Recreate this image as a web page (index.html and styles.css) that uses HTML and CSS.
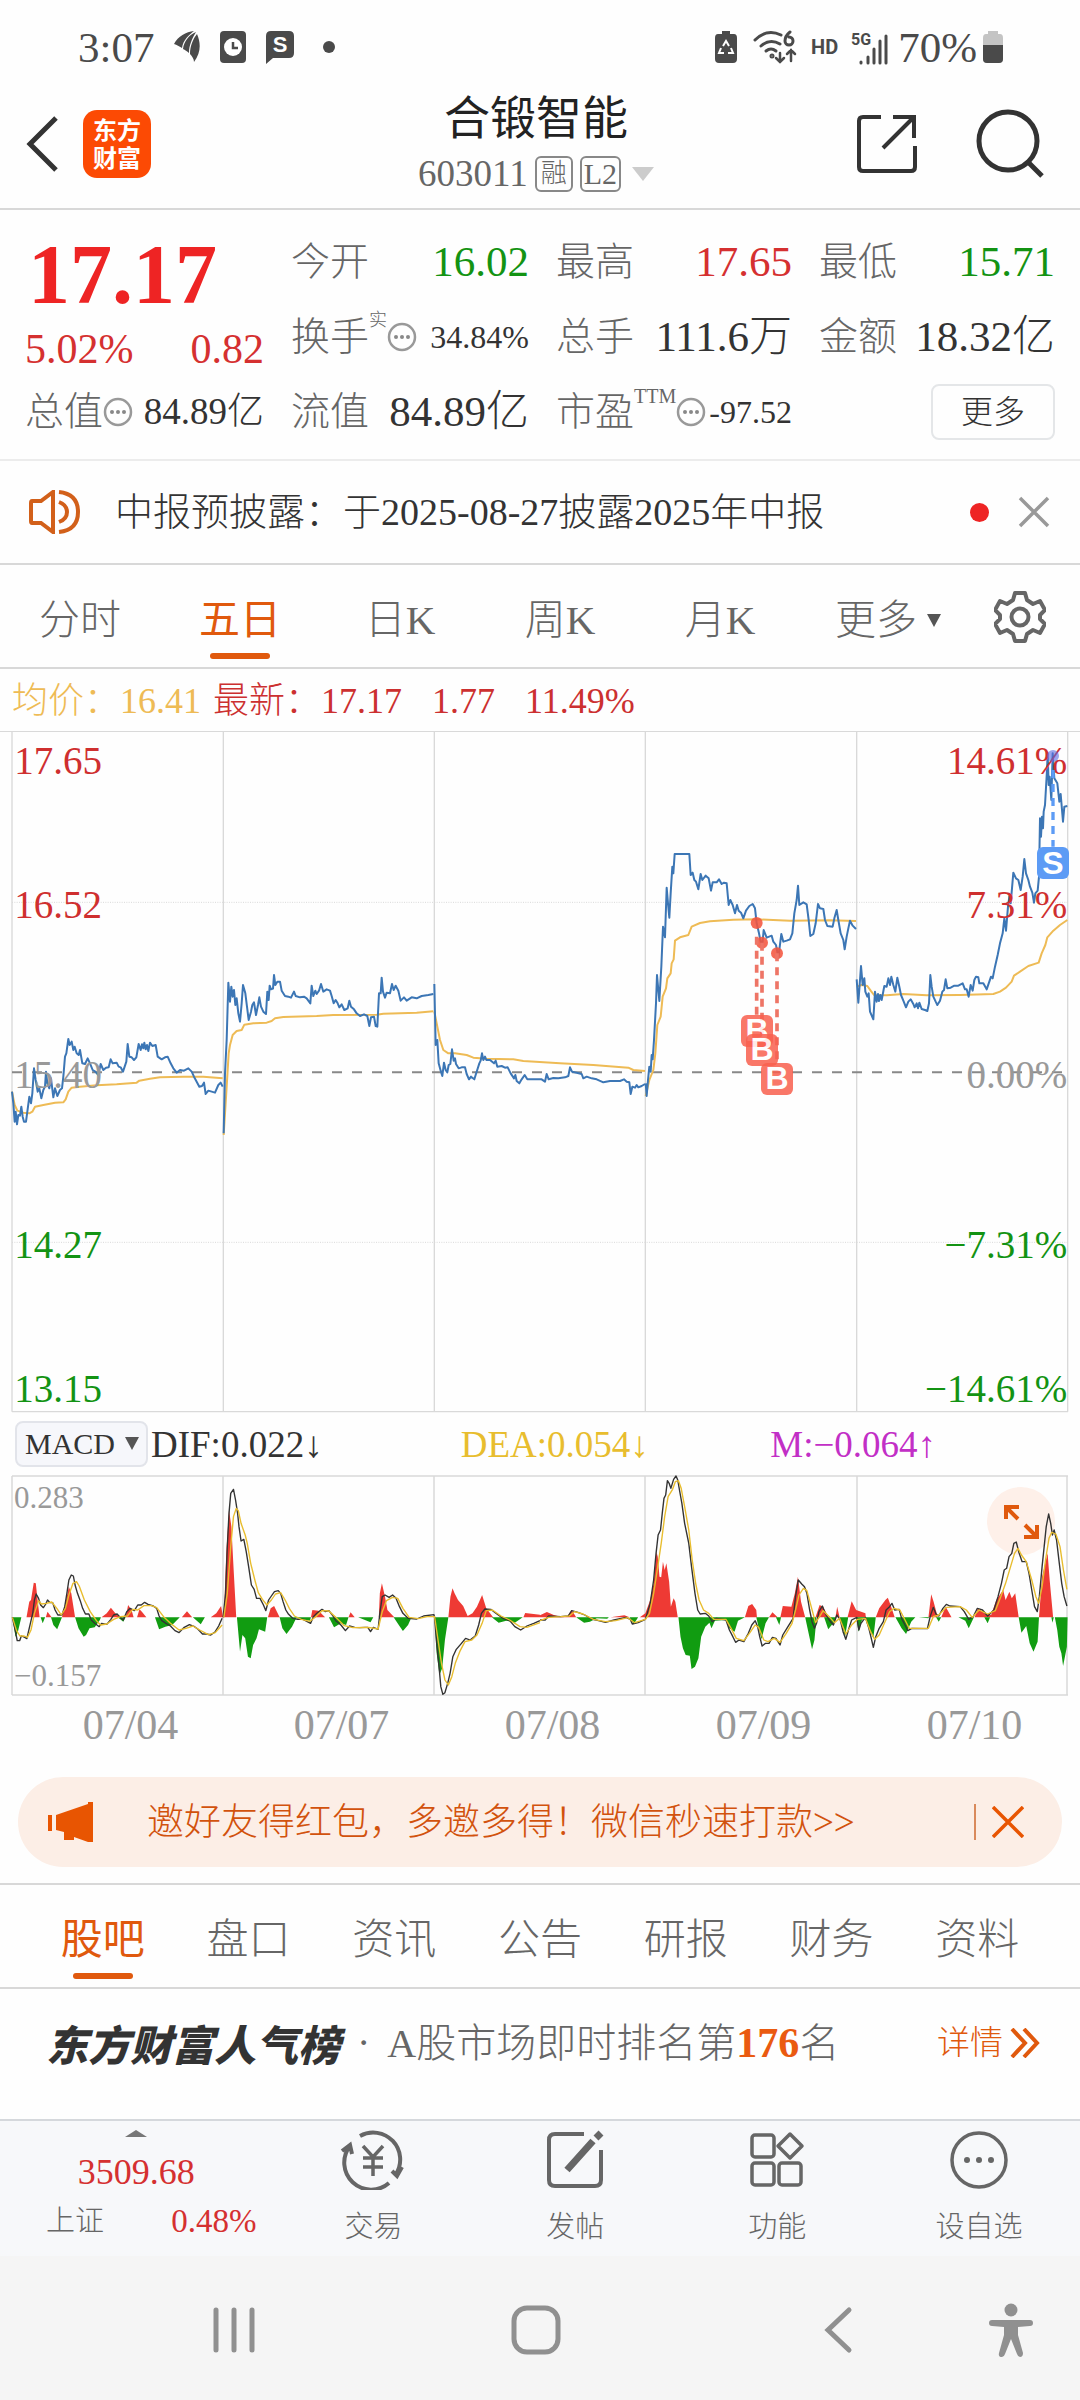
FILE: index.html
```html
<!DOCTYPE html>
<html lang="zh-CN">
<head>
<meta charset="utf-8">
<meta name="viewport" content="width=device-width, initial-scale=1">
<title>合锻智能 603011</title>
<link rel="stylesheet" href="styles.css">
</head>
<body>
<div class="status">
  <span class="status-time">3:07</span>
  <svg width="26" height="32" viewBox="0 0 26 32" fill="#4a4a4a"><path d="M0 13C4 5 12 1 20 0C15 4 9 9 8 17C5 15 3 14 0 13Z"/><path d="M9 18C10 10 15 4 22 1C18 8 15 14 15 22C13 20 11 19 9 18Z"/><path d="M16 23C16 15 19 8 23 3C27 12 27 22 20 31C20 28 18 25 16 23Z"/></svg>
  <svg class="st-clock" width="26" height="32" viewBox="0 0 26 32"><rect width="26" height="32" rx="4" fill="#4a4a4a"/><circle cx="13" cy="16" r="9" fill="#fff"/><path d="M13 11v6h5" fill="none" stroke="#4a4a4a" stroke-width="2.5"/></svg>
  <svg class="st-s" width="28" height="34" viewBox="0 0 28 34"><path d="M5 1H23Q28 1 28 6V23Q28 28 23 28H7L0 34V6Q0 1 5 1Z" fill="#4a4a4a"/><text x="14" y="22" text-anchor="middle" class="s-mark">S</text></svg>
  <svg class="st-dot" width="14" height="14" viewBox="0 0 14 14"><circle cx="7" cy="7" r="6" fill="#4a4a4a"/></svg>
  <div class="status-right">
    <svg width="22" height="32" viewBox="0 0 22 32"><path d="M7 0h8v3h4q3 0 3 4v21q0 4-4 4H4q-4 0-4-4V7q0-4 3-4h4Z" fill="#4a4a4a"/><path d="M8 15l3-5l3 5M16 17l2 5h-5M9 22H4l2-5" fill="none" stroke="#fff" stroke-width="2"/></svg>
    <svg class="st-wifi" width="44" height="34" viewBox="0 0 44 34" fill="none" stroke="#4a4a4a" stroke-width="3" stroke-linecap="round"><path d="M2 10Q14-2 28 5"/><path d="M8 16Q17 8 27 14"/><path d="M13 21Q18 17 23 21"/><circle cx="19" cy="26" r="1"/><path d="M37 2Q32 6 32 11a4 4 0 1 0 4-4"/><path d="M27 23v9m-4-4l4 4l4-4M38 31V20m-4 4l4-4l4 4" stroke-width="2.5"/></svg>
    <span class="st-hd">HD</span>
    <svg class="st-signal" width="40" height="38" viewBox="0 0 40 38"><text x="1" y="17" class="st-5g">5G</text><g stroke="#4a4a4a" stroke-width="3" stroke-linecap="round"><path d="M11 34v1M18 29v6M24 21v14M30 13v22M36 8v27"/></g></svg>
    <span class="status-time">70%</span>
    <svg class="st-bat" width="20" height="32" viewBox="0 0 20 32"><path d="M5 0h10v3h2q3 0 3 4v21q0 4-4 4H4q-4 0-4-4V7q0-4 3-4h2Z" fill="#c4c4c4"/><path d="M0 14h20v14q0 4-4 4H4q-4 0-4-4Z" fill="#4a4a4a"/></svg>
  </div>
</div>

<header class="top">
  <div class="top-left">
    <button class="plain" aria-label="返回"><svg width="34" height="56" viewBox="0 0 34 56" fill="none" stroke="#333" stroke-width="5"><path d="M30 2L4 28L30 54"/></svg></button>
    <div class="logo">东方<br>财富</div>
  </div>
  <div class="top-mid">
    <h1>合锻智能</h1>
    <div class="code"><span>603011</span><span class="tag">融</span><span class="tag tag-l2">L2</span><i class="caret"></i></div>
  </div>
  <div class="top-right">
    <button class="plain" aria-label="分享"><svg width="62" height="62" viewBox="0 0 62 62" fill="none" stroke="#333" stroke-width="4"><path d="M25 4H7Q3 4 3 8V54Q3 58 7 58H55Q59 58 59 54V33M37 4H58V25M58 4L27 35"/></svg></button>
    <button class="plain" aria-label="搜索"><svg width="70" height="70" viewBox="0 0 70 70" fill="none" stroke="#333" stroke-width="5"><circle cx="32" cy="32" r="29"/><path d="M52 53L66 67"/></svg></button>
  </div>
</header>

<section class="quote">
  <div class="price-box">
    <div class="price">17.17</div>
    <div class="change"><span>5.02%</span><span>0.82</span></div>
  </div>
  <div class="item a"><span class="lab">今开</span><span class="val green">16.02</span></div>
  <div class="item b"><span class="lab">最高</span><span class="val red">17.65</span></div>
  <div class="item c"><span class="lab">最低</span><span class="val green">15.71</span></div>
  <div class="item a"><span class="lab">换手<sup class="zh">实</sup><svg class="dots" viewBox="0 0 30 30"><use href="#dots"/></svg></span><span class="val small">34.84%</span></div>
  <div class="item b"><span class="lab">总手</span><span class="val">111.6万</span></div>
  <div class="item c"><span class="lab">金额</span><span class="val">18.32亿</span></div>
  <div class="item first"><span class="lab">总值<svg class="dots" viewBox="0 0 30 30"><use href="#dots"/></svg></span><span class="val mid">84.89亿</span></div>
  <div class="item a"><span class="lab">流值</span><span class="val">84.89亿</span></div>
  <div class="item b"><span class="lab">市盈<sup>TTM</sup><svg class="dots" viewBox="0 0 30 30"><use href="#dots"/></svg></span><span class="val small">-97.52</span></div>
  <div class="item c end"><button class="more">更多</button></div>
</section>
<svg class="defs" width="0" height="0" aria-hidden="true"><defs><g id="dots"><circle cx="15" cy="15" r="13" fill="none" stroke="#999" stroke-width="2.5"/><g fill="#888"><circle cx="9" cy="15" r="2"/><circle cx="15" cy="15" r="2"/><circle cx="21" cy="15" r="2"/></g></g></defs></svg>

<section class="notice">
  <svg width="52" height="44" viewBox="0 0 52 44" fill="none" stroke="#d2601a" stroke-width="4"><path d="M3 11H12L24 2V42L12 33H3Q2 33 2 31V13Q2 11 3 11ZM30 12Q38 15 38 22Q38 29 30 32M30 2Q49 4 49 22Q49 40 30 42"/></svg>
  <span class="notice-text">中报预披露：于2025-08-27披露2025年中报</span>
  <i class="red-dot"></i>
  <button class="plain" aria-label="关闭"><svg width="32" height="32" viewBox="0 0 32 32" stroke="#999" stroke-width="3.5"><path d="M2 2L30 30M30 2L2 30"/></svg></button>
</section>

<nav class="periods">
  <button>分时</button>
  <button class="on">五日</button>
  <button>日K</button>
  <button>周K</button>
  <button>月K</button>
  <button class="period-more">更多<i class="caret dark"></i></button>
  <button class="gear" aria-label="设置"><svg width="52" height="52" viewBox="0 0 52 52" fill="none" stroke="#666" stroke-width="4" stroke-linejoin="round"><path d="M21 2h10l2 7l6 4l7-3l5 9l-5 5v4l5 5l-5 9l-7-3l-6 4l-2 7H21l-2-7l-6-4l-7 3l-5-9l5-5v-4l-5-5l5-9l7 3l6-4Z"/><circle cx="26" cy="26" r="8.500"/></svg></button>
</nav>

<div class="avg"><span class="gold">均价：16.41</span><span>最新：17.17</span><span class="gap">1.77</span><span class="gap">11.49%</span></div>

<svg class="chart" viewBox="0 33 3240 2046" role="img" aria-label="五日走势">
  <g fill="none" stroke="#d9d9d9" stroke-width="4">
    <path d="M0 34H3240M36 2075H3204M36 34V2075M670 34V2075M1303 34V2075M1936 34V2075M2570 34V2075M3203 34V2075"/>
    <path d="M36 547H3204M36 1567H3204" stroke-width="3" stroke-dasharray="3 4"/>
    <path d="M36 1057H3204" stroke="#888" stroke-width="6" stroke-dasharray="30 30"/>
  </g>
  <g fill="none" stroke="#eebb55" stroke-width="6" stroke-linejoin="round">
    <polyline points="36,1115 44,1155 52,1172 70,1178 88,1180 97,1175 105,1160 130,1155 165,1148 190,1147 197,1138 205,1115 215,1103 240,1100 290,1096 350,1093 410,1088 418,1082 450,1076 480,1072 550,1070 610,1070 668,1075"/>
    <polyline points="671,1245 680,1100 686,1000 690,975 698,945 710,933 725,930 733,914 760,910 800,908 815,903 825,895 850,891 950,888 1000,885 1130,884 1150,881 1250,878 1300,874"/>
    <g transform="translate(1260 0)">
      <polyline points="43,875 52,920 60,960 70,990 85,1000 105,1000 140,1005 160,1013 200,1016 280,1018 310,1023 420,1030 520,1035 625,1043 640,1050 675,1053"/>
      <polyline points="677,1128 688,1080 700,1050 706,1000 712,915 722,890 728,830 738,805 742,775 752,760 755,730 761,718 765,662 780,652 805,645 815,620 840,609 870,604 940,599 1010,598 1110,602 1230,601 1308,603"/>
    </g>
    <g transform="translate(1920 0)">
      <polyline points="650,800 665,795 682,798 692,812 702,825 740,826 790,822 860,826 960,825 1060,822 1080,815 1098,803 1115,785 1122,767 1140,755 1165,738 1196,728 1205,700 1216,675 1222,652 1240,632 1260,615 1282,600"/>
    </g>
  </g>
  <g fill="none" stroke="#3c76b5" stroke-width="6" stroke-linejoin="round">
    <polyline points="36,1115 40,1150 44,1205 47,1175 51,1213 55,1185 60,1187 64,1160 68,1190 72,1205 78,1205 82,1175 88,1130 93,1150 97,1120 102,1045 107,1080 113,1115 118,1105 124,1135 130,1110 135,1100 138,1055 142,1090 148,1105 153,1075 160,1132 165,1105 172,1128 180,1110 186,1105 190,1070 195,1010 199,1000 205,957 209,975 215,965 220,990 224,980 230,1000 236,1005 240,990 247,1030 255,1032 263,1015 270,1030 278,1050 286,1055 295,1065 302,1032 310,1050 318,1043 326,1042 332,1018 338,1030 350,1028 356,1040 362,1042 369,1055 374,1040 379,1025 383,972 388,1010 395,1012 402,1020 409,1012 416,972 422,990 426,973 430,985 433,968 437,988 441,975 445,993 450,968 457,978 467,975 473,1010 485,1018 495,1012 503,1010 512,1030 520,1045 530,1058 540,1050 552,1052 565,1045 575,1055 582,1070 590,1085 598,1100 606,1098 612,1088 617,1122 625,1112 635,1115 645,1118 655,1095 662,1088 668,1100"/>
    <polyline points="671,1240 675,1060 680,960 685,788 690,845 694,800 698,830 702,810 706,855 710,835 715,880 720,905 725,850 729,795 736,820 741,860 746,900 753,875 757,855 762,847 768,885 774,855 778,832 783,860 790,875 798,882 802,815 806,840 809,797 813,808 819,806 822,765 826,795 832,785 840,785 845,812 855,828 865,830 873,833 882,815 887,828 900,832 912,830 920,835 931,850 935,797 940,828 946,812 950,822 957,812 963,792 970,815 980,808 990,812 995,828 1001,850 1007,840 1013,850 1018,862 1025,853 1033,870 1043,865 1048,842 1053,860 1062,868 1070,880 1080,888 1092,883 1102,888 1108,918 1113,892 1122,890 1127,918 1132,920 1137,820 1142,820 1145,773 1149,815 1155,833 1160,818 1170,820 1176,792 1181,810 1187,797 1195,812 1202,842 1212,832 1220,842 1235,832 1250,835 1265,828 1285,825 1300,822"/>
    <g transform="translate(1260 0)">
      <polyline points="43,792 47,975 52,960 56,1030 62,1052 67,1068 72,1028 77,1050 82,1057 86,1035 91,1032 96,988 101,1022 105,1015 108,1032 116,1045 125,1042 135,1042 140,1062 147,1078 153,1070 163,1078 170,1055 178,1030 182,1022 186,1000 190,1020 195,1010 199,1020 210,1020 222,1030 227,1022 232,1040 245,1038 255,1043 263,1042 272,1060 282,1075 286,1065 290,1083 298,1090 305,1078 314,1065 322,1078 345,1078 365,1078 375,1085 380,1062 386,1078 400,1074 415,1075 435,1072 445,1068 450,1042 456,1055 470,1058 485,1062 490,1075 500,1070 515,1075 530,1078 550,1087 570,1083 600,1083 612,1078 620,1085 628,1087 632,1122 637,1100 645,1103 650,1095 655,1102 665,1098 675,1092"/>
      <polyline points="677,1090 680,1128 684,1080 688,1040 692,1055 695,1005 698,1018 702,960 708,850 711,765 718,843 724,740 729,620 735,652 740,503 744,550 748,593 752,520 757,440 760,460 764,402 808,402 812,465 818,458 823,480 828,485 835,508 842,462 847,480 857,467 866,475 873,512 878,487 890,487 897,478 905,492 912,488 920,490 926,555 931,540 938,555 945,580 951,555 956,572 963,578 970,595 978,572 988,558 998,552 1005,565 1010,610 1017,640 1026,685 1031,630 1040,653 1055,647 1060,665 1068,675 1075,713 1084,642 1090,665 1100,662 1110,658 1117,640 1123,580 1130,540 1134,497 1138,555 1150,547 1160,553 1166,600 1171,648 1180,642 1187,610 1194,552 1200,565 1210,567 1215,600 1222,618 1238,620 1243,595 1250,570 1255,600 1262,640 1270,660 1274,688 1280,650 1285,625 1290,602 1298,617 1308,627"/>
    </g>
    <g transform="translate(1920 0)">
      <polyline points="650,778 655,848 660,780 663,738 668,795 673,775 676,815 682,830 686,820 690,875 700,898 705,815 710,845 714,822 717,843 721,825 725,840 733,798 740,800 745,775 750,795 754,770 760,795 766,815 772,773 778,800 783,825 790,842 798,862 805,845 812,838 820,852 824,862 830,850 834,865 838,848 845,867 855,870 862,873 867,850 871,765 875,800 880,830 887,845 892,855 900,842 907,815 912,810 917,778 922,805 932,803 943,797 955,797 968,790 975,808 980,808 986,830 992,795 998,812 1003,780 1008,770 1015,772 1018,790 1030,790 1040,808 1048,785 1053,770 1058,775 1065,740 1073,705 1080,670 1088,640 1093,595 1098,632 1104,560 1108,530 1112,550 1116,505 1120,458 1128,475 1135,480 1142,510 1148,470 1153,417 1158,460 1165,480 1170,500 1177,518 1182,548 1186,520 1193,512 1197,470 1200,295 1203,350 1206,290 1209,325 1211,275 1215,255 1221,150 1223,100 1226,195 1229,170 1234,240 1238,100 1243,175 1252,190 1258,245 1262,222 1269,305 1273,260 1282,258"/>
    </g>
  </g>
  <g class="axis">
    <text x="43" y="163" fill="#cf2f2f">17.65</text>
    <text x="43" y="595" fill="#cf2f2f">16.52</text>
    <text x="43" y="1103" fill="#999">15.40</text>
    <text x="43" y="1614" fill="#139313">14.27</text>
    <text x="43" y="2046" fill="#139313">13.15</text>
    <g text-anchor="end">
      <text x="3202" y="163" fill="#cf2f2f">14.61%</text>
      <text x="3202" y="595" fill="#cf2f2f">7.31%</text>
      <text x="3202" y="1103" fill="#999">0.00%</text>
      <text x="3202" y="1614" fill="#139313">−7.31%</text>
      <text x="3202" y="2046" fill="#139313">−14.61%</text>
    </g>
  </g>
  <g transform="translate(1260 0)">
    <g fill="#f4553f" fill-opacity=".88"><circle cx="1010" cy="609" r="18"/><circle cx="1026" cy="668" r="18"/><circle cx="1071" cy="700" r="18"/></g>
    <g stroke="#ee7566" stroke-width="11" stroke-dasharray="24 18"><path d="M1010 650V885M1026 668V942M1071 700V1028"/></g>
    <g class="mark">
      <g opacity=".85"><rect x="963" y="885" width="96" height="96" rx="18" fill="#f9604f"/><text x="1011" y="964">B</text></g>
      <g opacity=".85"><rect x="978" y="942" width="96" height="96" rx="18" fill="#f9604f"/><text x="1026" y="1021">B</text></g>
      <g opacity=".85"><rect x="1023" y="1029" width="96" height="96" rx="18" fill="#f9604f"/><text x="1071" y="1108">B</text></g>
    </g>
  </g>
  <g transform="translate(1920 0)">
    <circle cx="1239" cy="108" r="18" fill="#5a6be0" fill-opacity=".6"/>
    <path d="M1239 150V380" stroke="#5c9bf5" stroke-width="10" stroke-dasharray="24 18"/>
    <g class="mark"><rect x="1191" y="381" width="96" height="96" rx="18" fill="#5c9bf5"/><text x="1239" y="463">S</text></g>
  </g>
</svg>

<div class="macd-bar">
  <label class="pick"><select aria-label="指标"><option>MACD</option><option>KDJ</option></select><i class="caret dark"></i></label>
  <span>DIF:0.022↓</span><span class="yellow">DEA:0.054↓</span><span class="violet">M:−0.064↑</span>
</div>

<div class="macd">
  <svg class="chart" viewBox="0 0 1080 222" role="img" aria-label="MACD">
    <path d="M12 1H1068M12 220H1068M12 1V220M223 1V220M434 1V220M645 1V220M857 1V220M1067 1V220" fill="none" stroke="#d9d9d9" stroke-width="1.500"/>
    <g class="macd-axis"><text x="14" y="33">0.283</text><text x="14" y="211">−0.157</text></g>
    <g transform="translate(0 -95) scale(.34437 .33333)">
      <path fill="#ee3a34" d="M77 712L85 665L90 660L98 608L104 610L108 650L115 712ZM133 712L138 695L150 712ZM180 712L190 670L200 620L207 640L218 712ZM295 712L310 700L322 683L335 700L348 712ZM365 712L372 675L382 690L388 712ZM398 712L405 688L412 695L425 712ZM528 712L543 694L558 712ZM612 712L628 700L642 678L648 712ZM650 712L657 520L665 390L672 440L678 560L686 712ZM778 712L786 685L796 678L812 712ZM903 712L907 690L925 692L944 712ZM1012 712L1018 697L1030 712ZM1100 712L1103 640L1109 610L1118 650L1125 690L1145 712ZM1302 712L1308 650L1314 625L1320 640L1330 660L1345 678L1358 708L1372 700L1385 680L1400 645L1412 685L1432 712ZM1520 712L1525 699L1568 704L1568 712Z"/>
      <path fill="#119c11" d="M36 712L45 770L52 755L62 712ZM118 712L124 730L131 712ZM148 712L155 735L166 748L180 712ZM218 712L228 745L243 770L250 765L260 745L275 742L290 720L293 712ZM342 712L358 725L365 712ZM450 712L462 748L480 740L500 735L522 712ZM560 712L583 733L595 712ZM688 712L697 815L704 765L712 775L720 830L728 835L735 795L745 775L752 748L770 755L776 712ZM812 712L820 745L832 762L848 740L860 715L900 722L903 712ZM955 712L970 742L990 730L1005 735L1012 712ZM1040 712L1076 727L1084 712ZM1143 712L1158 735L1170 753L1185 735L1195 712ZM1262 712L1268 820L1276 885L1284 865L1292 780L1302 712ZM1428 712L1448 728L1470 722L1495 728L1518 712Z"/>
    </g>
    <g transform="translate(540 -95) scale(.34437 .33333)">
      <path fill="#ee3a34" d="M0 712L0 706L20 696L40 705L60 710L80 708L92 690L105 712ZM205 712L245 706L260 712ZM290 712L306 700L320 660L330 610L338 515L342 530L347 590L352 592L357 545L362 570L367 550L375 605L380 680L388 655L393 665L400 712ZM595 712L605 678L616 672L628 690L630 712ZM665 712L675 697L690 712ZM698 712L705 678L730 680L740 640L749 590L758 665L770 712ZM800 712L812 675L822 680L838 712ZM858 712L863 680L870 712ZM893 712L905 664L918 690L945 700L946 712ZM975 712L985 685L1003 660L1010 653L1018 675L1030 712ZM1128 712L1136 643L1143 665L1155 712ZM1165 712L1178 680L1195 712ZM1262 712L1272 685L1290 700L1310 705L1325 660L1345 630L1352 660L1363 635L1370 655L1380 640L1390 712ZM1449 712L1458 590L1466 555L1474 520L1480 600L1490 712Z"/>
      <path fill="#119c11" d="M105 712L128 728L145 725L165 715L195 716L200 712ZM260 712L272 733L285 712ZM402 712L408 770L415 805L423 825L435 827L440 867L450 860L460 835L468 770L480 740L492 728L498 745L508 722L540 720L550 745L565 755L575 722L595 712ZM628 712L643 778L655 730L665 712ZM685 712L695 735L700 712ZM770 712L780 760L790 808L797 780L803 712ZM825 712L837 748L855 725L860 712ZM870 712L886 770L895 712ZM918 712L925 755L935 720L945 712L958 750L968 775L975 712ZM1032 712L1050 745L1063 762L1078 725L1090 712ZM1100 712L1128 715L1130 712ZM1150 712L1158 725L1165 712ZM1215 712L1235 722L1245 745L1260 712ZM1290 712L1300 730L1307 712ZM1390 712L1398 758L1412 738L1422 790L1433 815L1445 785L1449 712ZM1485 712L1488 728L1492 712ZM1495 712L1502 750L1508 800L1514 820L1519 858L1530 800L1532 712Z"/>
    </g>
    <g class="thin" transform="translate(0 -95) scale(.34437 .33333)">
      <g stroke="#333">
        <polyline points="36,712 44,750 50,782 57,782 62,768 72,772 78,776 86,740 95,700 100,660 105,642 112,655 118,675 126,683 133,672 138,660 145,668 153,668 160,690 168,705 180,705 188,680 195,635 200,600 207,585 213,588 218,615 225,640 233,662 240,685 248,702 258,702 265,720 275,730 288,740 295,730 310,733 322,718 330,705 340,702 352,715 358,720 368,695 378,685 390,692 400,675 410,675 420,667 430,673 445,678 455,685 462,708 470,722 482,730 495,738 508,752 520,758 535,742 550,734 565,740 575,748 588,762 600,762 612,765 625,755 635,738 645,715"/>
        <polyline points="648,712 655,640 660,500 665,400 670,340 678,328 684,360 690,400 694,440 700,483 708,478 715,515 722,560 730,615 738,628 745,655 755,655 765,675 772,692 780,660 788,648 797,635 808,632 815,640 822,665 830,690 838,703 850,715 865,718 880,718 902,730 910,710 920,700 935,688 945,695 955,692 965,705 975,722 990,735 1003,752 1015,738 1030,742 1045,743 1060,742 1068,742 1076,755 1084,742 1098,748 1103,700 1110,650 1118,645 1130,652 1140,645 1150,655 1160,680 1170,700 1185,715 1210,717 1230,708 1260,704 1262,712 1268,790 1275,860 1280,920 1286,943 1292,938 1300,910 1307,880 1315,830 1325,808 1340,790 1352,775 1365,780 1380,768 1390,735 1398,700 1408,687 1425,688 1440,700 1460,715 1480,722 1495,740 1512,750 1530,738 1550,730 1568,722"/>
      </g>
      <g stroke="#e8bd2e">
        <polyline points="36,712 48,752 58,768 70,768 80,772 90,750 100,700 112,662 120,672 135,670 150,666 165,685 178,705 190,685 200,645 212,610 222,605 230,618 245,660 262,695 280,722 292,735 310,732 330,718 350,710 370,708 385,688 400,690 418,677 440,677 455,683 475,710 495,730 520,750 540,745 560,738 580,750 605,764 625,758 645,735"/>
        <polyline points="650,712 660,640 670,500 678,410 686,385 692,392 700,430 712,465 718,490 728,550 740,600 750,638 762,658 775,675 788,660 800,642 815,638 828,660 840,685 855,708 875,718 900,724 915,712 935,692 955,693 975,712 1000,737 1025,743 1070,742 1098,747 1110,695 1122,662 1140,652 1155,655 1170,685 1188,712 1215,716 1240,710 1262,710 1272,780 1282,850 1292,900 1302,915 1312,890 1322,850 1335,815 1350,785 1370,780 1385,765 1400,730 1412,692 1430,690 1455,708 1480,720 1510,740 1530,742 1568,728"/>
      </g>
    </g>
    <g class="thin" transform="translate(540 -95) scale(.34437 .33333)">
      <g stroke="#333">
        <polyline points="0,720 15,720 25,708 60,710 82,708 92,692 110,697 130,705 150,717 170,722 190,727 215,720 250,712 262,718 268,732 285,728 306,718 320,670 330,600 337,520 343,465 350,450 355,400 360,355 365,345 370,302 375,310 380,325 388,298 395,288 400,300 405,330 412,370 420,430 432,490 440,560 450,640 458,690 465,702 480,700 490,708 500,725 512,715 540,720 550,750 560,770 568,787 578,780 592,785 605,760 615,735 625,722 632,740 638,770 645,798 655,790 665,790 675,772 685,775 697,795 705,765 720,740 735,715 742,650 750,600 760,612 768,620 775,640 783,690 790,725 797,745 803,730 810,695 820,678 828,700 840,720 852,735 862,705 872,720 880,755 888,778 897,745 905,720 920,712 926,750 932,730 945,712 955,745 962,775 968,802 975,770 985,745 997,725 1005,690 1015,680 1022,670 1030,690 1043,688 1050,715 1060,735 1068,752 1080,745 1125,746 1133,710 1142,682 1150,702 1158,708 1170,685 1180,673 1190,678 1220,680 1232,695 1245,718 1258,710 1270,685 1285,690 1300,708 1318,690 1330,650 1340,610 1348,570 1355,565 1362,530 1370,520 1376,490 1383,486 1390,515 1400,545 1412,545 1420,580 1428,630 1436,680 1444,695 1450,650 1458,560 1465,490 1470,440 1477,402 1483,430 1488,465 1493,450 1500,480 1508,550 1515,610 1522,650 1530,678"/>
      </g>
      <g stroke="#e8bd2e">
        <polyline points="0,722 25,712 60,710 85,708 100,695 125,702 155,718 190,725 220,722 255,713 275,728 306,718 318,700 330,640 342,560 352,490 362,410 372,350 385,328 393,305 402,302 410,325 420,380 432,450 442,540 452,610 462,660 475,690 490,700 505,718 540,718 555,745 570,775 592,782 608,760 625,735 635,742 650,780 662,785 680,775 697,787 715,760 732,730 742,690 752,645 765,625 775,632 785,670 800,728 812,710 822,692 840,710 855,728 870,715 888,762 905,735 922,718 945,715 960,755 972,778 985,765 1000,730 1015,695 1028,685 1045,690 1060,720 1072,745 1128,745 1142,710 1158,705 1180,682 1220,680 1238,690 1255,712 1275,690 1300,702 1322,692 1338,650 1352,610 1365,565 1378,520 1388,505 1398,525 1412,545 1428,600 1440,650 1448,670 1458,620 1468,540 1478,475 1486,457 1498,462 1510,500 1520,570 1530,628"/>
      </g>
    </g>
  </svg>
  <button class="expand" aria-label="放大"><svg viewBox="0 0 68 68" fill="none" stroke="#e0590d" stroke-width="4"><path d="M19 32V20H32M20 21L31 32M50 38V50H37M49 49L38 38"/></svg></button>
</div>
<div class="dates"><span>07/04</span><span>07/07</span><span>07/08</span><span>07/09</span><span>07/10</span></div>

<div class="banner">
  <svg width="46" height="40" viewBox="0 0 46 40" fill="#e85502"><path d="M0 13h4v16H0ZM8 13L40 2V0H45V40H40L26 35V38H16V30L8 28Z"/></svg>
  <a href="#invite">邀好友得红包，多邀多得！微信秒速打款&gt;&gt;</a>
  <button class="plain close" aria-label="关闭"><svg width="32" height="32" viewBox="0 0 32 32" stroke="#e85502" stroke-width="3.500"><path d="M1 1L31 31M31 1L1 31"/></svg></button>
</div>

<nav class="sections">
  <button class="on">股吧</button><button>盘口</button><button>资讯</button><button>公告</button><button>研报</button><button>财务</button><button>资料</button>
</nav>

<section class="rank">
  <strong class="rank-brand">东方财富人气榜</strong>
  <span class="rank-dot">·</span>
  <span>A股市场即时排名第<b>176</b>名</span>
  <a class="detail" href="#rank">详情<svg width="30" height="30" viewBox="0 0 30 30" fill="none" stroke="#e0590d" stroke-width="4"><path d="M2 1L15 15L2 29M14 1L27 15L14 29"/></svg></a>
</section>

<footer class="bottom">
  <div class="index">
    <i class="up"></i>
    <span class="index-val">3509.68</span>
    <div class="index-row"><span>上证</span><span class="index-pct">0.48%</span></div>
  </div>
  <button><svg width="66" height="60" viewBox="0 0 66 60" fill="none" stroke="#666" stroke-width="4"><path d="M20 6A27 27 0 0 1 56 44M62 37l-5 9l-5-5"/><path d="M49 53A27 27 0 0 1 10 16M2 21l8-6l2 9"/><path d="M23 16L33 27L43 16M33 27V46M23 28H43M23 37H43" stroke-width="3.500"/></svg>交易</button>
  <button><svg width="60" height="60" viewBox="0 0 60 60" fill="none" stroke="#666" stroke-width="4"><path d="M39 4H10Q4 4 4 10V50Q4 56 10 56H50Q56 56 56 50V20"/><path d="M22 40L48 11M51 8L56 3" stroke-width="7"/></svg>发帖</button>
  <button><svg width="60" height="60" viewBox="0 0 60 60" fill="none" stroke="#666" stroke-width="3.500"><rect x="5" y="5" width="22" height="22" rx="3"/><rect x="5" y="33" width="22" height="22" rx="3"/><rect x="32" y="33" width="22" height="22" rx="3"/><path d="M43 4L55 16L43 28L31 16Z" stroke-linejoin="round"/></svg>功能</button>
  <button><svg width="60" height="60" viewBox="0 0 60 60"><circle cx="30" cy="30" r="27" fill="none" stroke="#666" stroke-width="3.500"/><g fill="#666"><circle cx="18" cy="30" r="3"/><circle cx="30" cy="30" r="3"/><circle cx="42" cy="30" r="3"/></g></svg>设自选</button>
</footer>

<div class="sysnav">
  <button aria-label="最近"><svg width="44" height="48" viewBox="0 0 44 48" stroke="#909090" stroke-width="5" stroke-linecap="round"><path d="M4 4V44M22 4V44M40 4V44"/></svg></button>
  <button aria-label="主页"><svg width="50" height="50" viewBox="0 0 50 50" fill="none" stroke="#909090" stroke-width="5"><rect x="3" y="3" width="44" height="44" rx="13"/></svg></button>
  <button aria-label="后退"><svg width="30" height="48" viewBox="0 0 30 48" fill="none" stroke="#909090" stroke-width="5" stroke-linecap="round"><path d="M26 4L5 24L26 44"/></svg></button>
  <button class="last" aria-label="无障碍"><svg width="44" height="54" viewBox="0 0 44 54" fill="#909090"><circle cx="22" cy="7" r="6.500"/><path d="M3 17H41Q44 17 44 20Q44 23 41 23L29 24V32L34 50Q34 54 31 54Q29 54 28 51L22 36L16 51Q15 54 13 54Q9 54 10 50L15 32V24L3 23Q0 23 0 20Q0 17 3 17Z"/></svg></button>
</div>
</body>
</html>
```
FILE: styles.css
```css
* { box-sizing: border-box; }
body {
  margin: 0;
  background: #fefefe;
  color: #333;
  font-family: "Liberation Serif", "Noto Sans CJK SC", serif;
  font-weight: 300;
  line-height: 1;
}
button, select {
  font: inherit;
  color: inherit;
  background: none;
  border: 0;
  padding: 0;
  margin: 0;
}
svg { display: block; flex: none; }
a { color: inherit; text-decoration: none; }
.plain { display: flex; }
.defs { position: absolute; }

.status {
  display: flex;
  align-items: center;
  height: 94px;
  padding: 0 77px 0 78px;
  color: #4a4a4a;
}
.status-time { font-size: 43px; }
.status > .status-time { margin-right: 20px; }
.st-clock { margin-left: 20px; }
.st-s { margin-left: 20px; }
.st-dot { margin-left: 28px; }
.s-mark { font: bold 22px "Liberation Sans", sans-serif; fill: #fff; }
.status-right { display: flex; align-items: center; margin-left: auto; }
.st-wifi { margin: 0 14px 0 16px; }
.st-hd { font: bold 20px Roboto, sans-serif; margin-right: 12px; }
.st-5g { font: bold 16px Roboto, sans-serif; fill: #4a4a4a; }
.status-right .status-time { margin-left: 8px; }
.st-bat { margin-left: 6px; }

.top {
  display: grid;
  grid-template-columns: 1fr auto 1fr;
  align-items: center;
  height: 116px;
  padding: 0 34px 14px 26px;
  border-bottom: 2px solid #d8d8d8;
}
.top-left, .top-right { display: flex; align-items: center; }
.top-left { gap: 23px; }
.top-right { justify-content: flex-end; gap: 58px; }
.logo {
  width: 68px;
  height: 68px;
  border-radius: 14px;
  background: #fc4a04;
  color: #fff;
  font: bold 24px/28px "Noto Sans CJK SC", sans-serif;
  text-align: center;
  padding-top: 5px;
}
.top-mid { display: flex; flex-direction: column; align-items: center; gap: 13px; }
h1 { margin: 0; font-size: 46px; font-weight: 400; color: #222; }
.code { display: flex; align-items: center; gap: 7px; font-size: 37px; color: #666; }
.tag {
  display: flex;
  align-items: center;
  height: 36px;
  padding: 0 4px;
  border: 2px solid #888;
  border-radius: 6px;
  font-size: 26px;
}
.tag-l2 { font-size: 30px; padding: 0 2px; }
.caret {
  border: 11px solid transparent;
  border-top: 14px solid #ccc;
  border-bottom: 0;
  margin-left: 4px;
}
.caret.dark { border-width: 13px 7px 0; border-top-color: #555; }

.quote {
  display: grid;
  grid-template-columns: 239fr 238fr 236fr 236fr;
  grid-template-rows: repeat(3, 75px);
  column-gap: 27px;
  padding: 14px 25px 10px;
  border-bottom: 2px solid #ececec;
}
.price-box { grid-row: span 2; display: flex; flex-direction: column; color: #d53030; }
.price { font-size: 84px; font-weight: 700; color: #ee2424; padding: 9px 0 0 3px; }
.change { display: flex; justify-content: space-between; font-size: 42px; margin-top: 11px; }
.item { display: flex; align-items: center; justify-content: space-between; white-space: nowrap; }
.lab { display: flex; align-items: center; font-size: 39px; color: #666; }
.lab sup { align-self: flex-start; font-size: 20px; margin-top: -6px; }
.lab sup.zh { font-size: 18px; }
.dots { width: 30px; height: 30px; }
.val { font-size: 43px; }
.val.mid { font-size: 37px; }
.val.small { font-size: 32px; }
.green { color: #139313; }
.red { color: #d53030; }
.end { justify-content: flex-end; }
.more {
  width: 124px;
  height: 56px;
  border: 2px solid #e4e6e8;
  border-radius: 8px;
  font-size: 32px;
}

.notice {
  display: flex;
  align-items: center;
  height: 104px;
  padding: 0 30px 0 29px;
  border-bottom: 2px solid #d8d8d8;
}
.notice-text { margin-left: 34px; font-size: 38px; }
.red-dot { width: 19px; height: 19px; border-radius: 50%; background: #ee2424; margin: 0 29px 0 auto; }

.periods {
  display: grid;
  grid-template-columns: repeat(6, 4fr) 3fr;
  height: 104px;
  border-bottom: 2px solid #d8d8d8;
  font-size: 41px;
  color: #666;
}
.periods button, .sections button {
  position: relative;
  display: flex;
  align-items: center;
  justify-content: center;
  padding-top: 8px;
}
.periods .gear { padding-top: 2px; }
.periods .period-more { padding-left: 16px; }
.periods .caret { margin-left: 10px; }
.on { color: #e0590d; font-weight: 400; }
.on::after {
  content: "";
  position: absolute;
  left: calc(50% - 30px);
  bottom: 8px;
  width: 60px;
  height: 6px;
  border-radius: 3px;
  background: #e0590d;
}
.avg {
  display: flex;
  align-items: center;
  gap: 12px;
  height: 62px;
  padding: 2px 0 0 12px;
  font-size: 36px;
  color: #cc3030;
}
.gold { color: #eebb55; }
.avg .gap { margin-left: 18px; }

.chart { width: 100%; height: auto; }
.axis { font-size: 117px; }
.mark { font: bold 96px "Liberation Sans", sans-serif; fill: #fff; text-anchor: middle; }

.macd-bar {
  display: grid;
  grid-template-columns: 151px 1fr 1fr 1fr;
  align-items: center;
  height: 62px;
  font-size: 37px;
}
.pick { position: relative; width: 133px; margin-left: 15px; }
.pick select {
  display: block;
  appearance: none;
  width: 100%;
  height: 46px;
  padding: 0 0 0 8px;
  border: 2px solid #e2e4ea;
  border-radius: 8px;
  background: #f6f7fb;
  font-size: 30px;
}
.pick .caret { position: absolute; right: 9px; top: 16px; pointer-events: none; }
.yellow { color: #e8bd2e; }
.violet { color: #c22fc6; }

.macd { position: relative; z-index: 0; }
.macd-axis { font-size: 31px; fill: #999; }
.thin { fill: none; stroke-width: 4px; stroke-linejoin: round; }
.expand {
  position: absolute;
  z-index: -1;
  top: 12px;
  right: 25px;
  width: 68px;
  height: 68px;
  border-radius: 50%;
  background: #fef0e9;
}
.macd > .chart { pointer-events: none; }
.dates {
  display: grid;
  grid-template-columns: repeat(5, 1fr);
  padding: 7px 0 0 25px;
  height: 80px;
  font-size: 42px;
  color: #999;
  text-align: center;
}

.banner {
  display: flex;
  align-items: center;
  height: 90px;
  margin: 0 18px 16px;
  padding: 0 38px 0 30px;
  border-radius: 45px;
  background: #fceee6;
  color: #d2520d;
}
.banner a { margin-left: 53px; font-size: 37px; }
.close { margin-left: auto; padding: 2px 0 2px 16px; border-left: 2px solid #d98a5c; }

.sections {
  display: grid;
  grid-template-columns: repeat(7, 1fr);
  height: 106px;
  padding: 0 30px;
  border: solid #d8d8d8;
  border-width: 2px 0;
  font-size: 42px;
  color: #666;
}
.rank {
  display: flex;
  align-items: center;
  height: 130px;
  padding: 0 40px 22px 46px;
  font-size: 40px;
  color: #666;
}
.rank-brand { font: italic 900 42px/1 "Noto Sans CJK SC", sans-serif; color: #333; }
.rank-dot { margin: 0 17px; }
.rank b { font-size: 42px; font-weight: 700; color: #ea5a10; }
.detail { display: flex; align-items: center; gap: 7px; margin-left: auto; font-size: 33px; color: #e0590d; }

.bottom {
  display: grid;
  grid-template-columns: 27fr repeat(4, 20fr);
  height: 137px;
  border-top: 2px solid #d5d8dc;
  background: #f7f8fa;
  color: #666;
  font-size: 29px;
}
.bottom button { display: flex; flex-direction: column; align-items: center; padding-top: 9px; gap: 23px; }
.index { display: flex; flex-direction: column; align-items: center; padding-top: 9px; }
.up { border: 11px solid transparent; border-bottom: 7px solid #777; border-top: 0; }
.index-val { font-size: 36px; color: #d53030; margin: 17px 0 15px; }
.index-row { display: flex; justify-content: space-between; align-items: center; width: 100%; padding: 0 16px 0 46px; }
.index-pct { font-size: 33px; color: #d53030; }

.sysnav {
  display: grid;
  grid-template-columns: repeat(3, 302fr) 91fr;
  align-items: center;
  justify-items: center;
  height: 144px;
  padding: 4px 0 0 83px;
  background: #f5f5f5;
}
.sysnav .last { justify-self: start; }
```
